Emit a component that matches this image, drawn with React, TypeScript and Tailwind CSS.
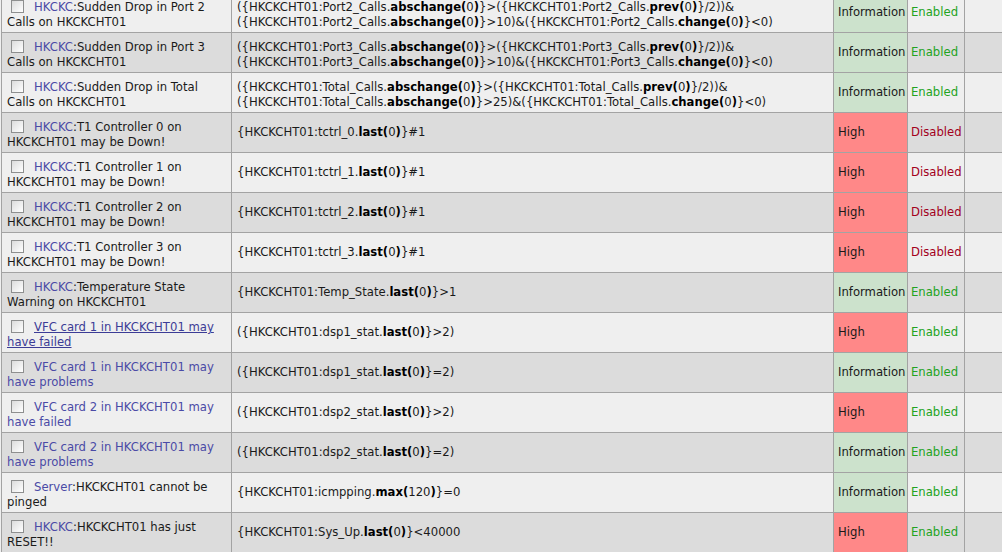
import React from 'react';

type Part = { t: string; b?: boolean };

interface TriggerRow {
  prefix?: string;
  name: string[];
  expr: Part[][];
  severity: 'Information' | 'High';
  status: 'Enabled' | 'Disabled';
  fullLink?: boolean;
  hover?: boolean;
}

// parse "**bold**" markers into parts
const p = (s: string): Part[] =>
  s.split(/(\*\*[^*]+\*\*)/).filter(Boolean).map((x) =>
    x.startsWith('**') ? { t: x.slice(2, -2), b: true } : { t: x }
  );

const rows: TriggerRow[] = [
  {
    prefix: 'HKCKC',
    name: [':Sudden Drop in Port 2', 'Calls on HKCKCHT01'],
    expr: [
      p('({HKCKCHT01:Port2_Calls.**abschange(**0**)**}>({HKCKCHT01:Port2_Calls.**prev(**0**)**}/2))&'),
      p('({HKCKCHT01:Port2_Calls.**abschange(**0**)**}>10)&({HKCKCHT01:Port2_Calls.**change(**0**)**}<0)'),
    ],
    severity: 'Information',
    status: 'Enabled',
  },
  {
    prefix: 'HKCKC',
    name: [':Sudden Drop in Port 3', 'Calls on HKCKCHT01'],
    expr: [
      p('({HKCKCHT01:Port3_Calls.**abschange(**0**)**}>({HKCKCHT01:Port3_Calls.**prev(**0**)**}/2))&'),
      p('({HKCKCHT01:Port3_Calls.**abschange(**0**)**}>10)&({HKCKCHT01:Port3_Calls.**change(**0**)**}<0)'),
    ],
    severity: 'Information',
    status: 'Enabled',
  },
  {
    prefix: 'HKCKC',
    name: [':Sudden Drop in Total', 'Calls on HKCKCHT01'],
    expr: [
      p('({HKCKCHT01:Total_Calls.**abschange(**0**)**}>({HKCKCHT01:Total_Calls.**prev(**0**)**}/2))&'),
      p('({HKCKCHT01:Total_Calls.**abschange(**0**)**}>25)&({HKCKCHT01:Total_Calls.**change(**0**)**}<0)'),
    ],
    severity: 'Information',
    status: 'Enabled',
  },
  ...[0, 1, 2, 3].map(
    (n): TriggerRow => ({
      prefix: 'HKCKC',
      name: [`:T1 Controller ${n} on`, 'HKCKCHT01 may be Down!'],
      expr: [p(`{HKCKCHT01:tctrl_${n}.**last(**0**)**}#1`)],
      severity: 'High',
      status: 'Disabled',
    })
  ),
  {
    prefix: 'HKCKC',
    name: [':Temperature State', 'Warning on HKCKCHT01'],
    expr: [p('{HKCKCHT01:Temp_State.**last(**0**)**}>1')],
    severity: 'Information',
    status: 'Enabled',
  },
  {
    name: ['VFC card 1 in HKCKCHT01 may', 'have failed'],
    expr: [p('({HKCKCHT01:dsp1_stat.**last(**0**)**}>2)')],
    severity: 'High',
    status: 'Enabled',
    fullLink: true,
    hover: true,
  },
  {
    name: ['VFC card 1 in HKCKCHT01 may', 'have problems'],
    expr: [p('({HKCKCHT01:dsp1_stat.**last(**0**)**}=2)')],
    severity: 'Information',
    status: 'Enabled',
    fullLink: true,
  },
  {
    name: ['VFC card 2 in HKCKCHT01 may', 'have failed'],
    expr: [p('({HKCKCHT01:dsp2_stat.**last(**0**)**}>2)')],
    severity: 'High',
    status: 'Enabled',
    fullLink: true,
  },
  {
    name: ['VFC card 2 in HKCKCHT01 may', 'have problems'],
    expr: [p('({HKCKCHT01:dsp2_stat.**last(**0**)**}=2)')],
    severity: 'Information',
    status: 'Enabled',
    fullLink: true,
  },
  {
    prefix: 'Server',
    name: [':HKCKCHT01 cannot be', 'pinged'],
    expr: [p('{HKCKCHT01:icmpping.**max(**120**)**}=0')],
    severity: 'Information',
    status: 'Enabled',
  },
  {
    prefix: 'HKCKC',
    name: [':HKCKCHT01 has just', 'RESET!!'],
    expr: [p('{HKCKCHT01:Sys_Up.**last(**0**)**}<40000')],
    severity: 'High',
    status: 'Enabled',
  },
];

const Checkbox = () => (
  <span className="inline-block align-[-2px] w-[13px] h-[13px] ml-[4px] mr-[10px] border border-[#8e8f8f] bg-gradient-to-br from-[#dcdcdc] to-white" />
);

export default function App() {
  return (
    <div
      className="h-[552px] w-[1002px] overflow-hidden bg-[#efefef] text-[11.65px] leading-[15px] text-[#1a1a1a]"
      style={{ fontFamily: '"DejaVu Sans", Verdana, sans-serif' }}
    >
      <table className="-mt-[8px] ml-[1px] w-[1020px] border-collapse table-fixed">
        <colgroup>
          <col className="w-[230px]" />
          <col className="w-[602px]" />
          <col className="w-[74px]" />
          <col className="w-[57px]" />
          <col className="w-[57px]" />
        </colgroup>
        <tbody>
          {rows.map((r, i) => {
            const bg = i % 2 === 0 ? 'bg-[#efefef]' : 'bg-[#dcdcdc]';
            const link = r.hover ? 'text-[#3c3c96] underline' : 'text-[#4a4aa6]';
            return (
              <tr key={i} className={`h-[40px] ${bg}`}>
                <td className="border border-[#a3a3a3] pl-[5px] pr-1 pt-[5px] pb-0 align-middle whitespace-nowrap">
                  <div>
                    <Checkbox />
                    {r.fullLink ? (
                      <span className={link}>{r.name[0]}</span>
                    ) : (
                      <>
                        <span className={link}>{r.prefix}</span>
                        <span>{r.name[0]}</span>
                      </>
                    )}
                  </div>
                  <div>
                    {r.fullLink ? <span className={link}>{r.name[1]}</span> : r.name[1]}
                  </div>
                </td>
                <td
                  className={`border border-[#a3a3a3] pl-[5px] pb-0 align-middle whitespace-nowrap ${
                    r.expr.length > 1 ? 'pt-[5px]' : 'pt-0'
                  }`}
                >
                  {r.expr.map((line, li) => (
                    <div key={li}>
                      {line.map((part, pi) =>
                        part.b ? (
                          <b key={pi} className="font-bold text-black">
                            {part.t}
                          </b>
                        ) : (
                          <span key={pi}>{part.t}</span>
                        )
                      )}
                    </div>
                  ))}
                </td>
                <td
                  className={`border border-[#a3a3a3] pl-[4px] align-middle whitespace-nowrap ${
                    r.severity === 'High' ? 'bg-[#ff8888]' : 'bg-[#cce2cc]'
                  }`}
                >
                  {r.severity}
                </td>
                <td
                  className={`border border-[#a3a3a3] pl-[3px] align-middle whitespace-nowrap ${
                    r.status === 'Enabled' ? 'text-[#22a322]' : 'text-[#a3001c]'
                  }`}
                >
                  {r.status}
                </td>
                <td className="border border-[#a3a3a3]" />
              </tr>
            );
          })}
        </tbody>
      </table>
    </div>
  );
}
